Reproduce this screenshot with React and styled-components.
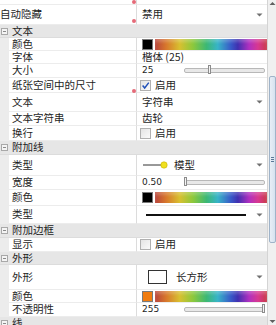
import React from "react";
import styled, { createGlobalStyle } from "styled-components";

const Global = createGlobalStyle`
  html, body {
    margin: 0;
    padding: 0;
    background: #ffffff;
  }
  body {
    font-family: "Noto Sans CJK SC", "Noto Sans", sans-serif;
    color: #1e1e1e;
  }
`;

const RAINBOW =
  "linear-gradient(to right, #b8443c 0%, #d8782c 10%, #d8c030 22%, #8cc83c 34%, #3cb874 46%, #38b4c8 56%, #3858c8 68%, #4030b0 74%, #b030c0 84%, #d83890 92%, #c83c48 100%)";

export default function App() {
  return (
    <>
      <Global />
      <Frame>
        <Grid>
          <Scrolled>
            <Row h={20}>
              <Label>线条</Label>
              <Value />
              <Dot top={15} />
            </Row>
            <Row h={20}>
              <Label>自动隐藏</Label>
              <Value>
                <ValueText>禁用</ValueText>
                <Arrow />
              </Value>
              <Dot top={14} />
            </Row>

            <Group h={13} title="文本" />
            <Row h={13}>
              <Label indent>颜色</Label>
              <Value>
                <ColorCell swatch="#000000" />
              </Value>
            </Row>
            <Row h={13}>
              <Label indent>字体</Label>
              <Value>
                <ValueText>楷体 (25)</ValueText>
              </Value>
            </Row>
            <Row h={14}>
              <Label indent>大小</Label>
              <Value>
                <Slider text="25" pos={32} />
              </Value>
            </Row>
            <Row h={15}>
              <Label indent>纸张空间中的尺寸</Label>
              <Value>
                <CheckCell checked />
              </Value>
              <Dot top={11} />
            </Row>
            <Row h={19}>
              <Label indent>文本</Label>
              <Value>
                <ValueText>字符串</ValueText>
                <Arrow />
              </Value>
            </Row>
            <Row h={14}>
              <Label indent>文本字符串</Label>
              <Value>
                <ValueText>齿轮</ValueText>
              </Value>
            </Row>
            <Row h={15}>
              <Label indent>换行</Label>
              <Value>
                <CheckCell />
              </Value>
            </Row>

            <Group h={14} title="附加线" />
            <Row h={21}>
              <Label indent>类型</Label>
              <Value>
                <LineMarker>
                  <svg width="26" height="8" viewBox="0 0 26 8">
                    <line x1="0" y1="4" x2="19" y2="4" stroke="#333" strokeWidth="1" />
                    <circle cx="21" cy="4" r="3.2" fill="#f0e020" stroke="#c8b400" strokeWidth="0.6" />
                  </svg>
                </LineMarker>
                <ValueText>模型</ValueText>
                <Arrow />
              </Value>
            </Row>
            <Row h={14}>
              <Label indent>宽度</Label>
              <Value>
                <Slider text="0.50" pos={1} />
              </Value>
            </Row>
            <Row h={16}>
              <Label indent>颜色</Label>
              <Value>
                <ColorCell swatch="#000000" />
              </Value>
            </Row>
            <Row h={18}>
              <Label indent>类型</Label>
              <Value>
                <LineSample />
                <Arrow />
              </Value>
            </Row>

            <Group h={14} title="附加边框" />
            <Row h={14}>
              <Label indent>显示</Label>
              <Value>
                <CheckCell />
              </Value>
            </Row>

            <Group h={13} title="外形" />
            <Row h={25}>
              <Label indent>外形</Label>
              <Value>
                <ShapeBox />
                <ValueText>长方形</ValueText>
                <Arrow />
              </Value>
            </Row>
            <Row h={13}>
              <Label indent>颜色</Label>
              <Value>
                <ColorCell swatch="#f07c10" />
              </Value>
            </Row>
            <Row h={14}>
              <Label indent>不透明性</Label>
              <Value>
                <Slider text="255" pos={100} />
              </Value>
            </Row>
            <Group h={14} title="线" />
          </Scrolled>
        </Grid>
        <ScrollBar>
          <ScrollButton>
            <svg width="7" height="5" viewBox="0 0 7 5">
              <path d="M0.5 4 L3.5 1 L6.5 4 Z" fill="#606060" />
            </svg>
          </ScrollButton>
          <Track>
            <Thumb>
              <Grip />
              <Grip />
              <Grip />
            </Thumb>
          </Track>
          <ScrollButton>
            <svg width="7" height="5" viewBox="0 0 7 5">
              <path d="M0.5 1 L3.5 4 L6.5 1 Z" fill="#606060" />
            </svg>
          </ScrollButton>
        </ScrollBar>
      </Frame>
    </>
  );
}

function Group({ h, title }) {
  return (
    <GroupRow h={h}>
      <ToggleSlot>
        <Toggle />
      </ToggleSlot>
      <GroupTitle>{title}</GroupTitle>
    </GroupRow>
  );
}

function Arrow() {
  return (
    <ArrowBox>
      <svg width="7" height="4" viewBox="0 0 7 4">
        <path d="M0.5 0.5 L6.5 0.5 L3.5 3.5 Z" fill="#707070" />
      </svg>
    </ArrowBox>
  );
}

function ColorCell({ swatch }) {
  return (
    <>
      <Swatch color={swatch} />
      <Spectrum />
    </>
  );
}

function CheckCell({ checked }) {
  return (
    <>
      <Box>
        {checked && (
          <svg width="11" height="11" viewBox="0 0 11 11">
            <path d="M2 5.5 L4.5 8.5 L9.5 2" fill="none" stroke="#2050b8" strokeWidth="1.8" />
          </svg>
        )}
      </Box>
      <ValueText>启用</ValueText>
    </>
  );
}

function Slider({ text, pos }) {
  return (
    <>
      <Number>{text}</Number>
      <Rail>
        <Knob style={{ left: `${pos}%` }} />
      </Rail>
    </>
  );
}

const Frame = styled.div`
  width: 276px;
  height: 325px;
  display: flex;
  overflow: hidden;
  background: #ffffff;
`;

const Grid = styled.div`
  width: 268px;
  height: 325px;
  overflow: hidden;
  border-right: 1px solid #d4d4d4;
  box-sizing: border-box;
`;

const Scrolled = styled.div`
  display: flex;
  flex-direction: column;
  margin-top: -15px;
`;

const Row = styled.div`
  position: relative;
  display: flex;
  height: ${(p) => p.h}px;
  flex-shrink: 0;
`;

const Label = styled.div`
  width: 137px;
  flex-shrink: 0;
  box-sizing: border-box;
  display: flex;
  align-items: center;
  padding-left: ${(p) => (p.indent ? "12px" : "0")};
  font-size: 10.5px;
  line-height: 1;
  white-space: nowrap;
  border-right: 1px solid #dcdcdc;
  border-bottom: 1px solid #ececec;
  background: ${(p) =>
    p.indent
      ? "linear-gradient(to right, #ececec 0, #ececec 9px, #ffffff 9px)"
      : "#ffffff"};
`;

const Value = styled.div`
  flex: 1;
  min-width: 0;
  display: flex;
  align-items: center;
  padding-left: 5px;
  box-sizing: border-box;
  border-bottom: 1px solid #ececec;
`;

const ValueText = styled.span`
  font-size: 10.5px;
  line-height: 1;
  white-space: nowrap;
`;

const Dot = styled.span`
  position: absolute;
  left: 132px;
  top: ${(p) => p.top}px;
  width: 4px;
  height: 4px;
  border-radius: 50%;
  background: #e05060;
  opacity: 0.85;
`;

const GroupRow = styled.div`
  display: flex;
  align-items: center;
  height: ${(p) => p.h}px;
  flex-shrink: 0;
  background: #e6e6e6;
  border-bottom: 1px solid #dcdcdc;
  box-sizing: border-box;
`;

const ToggleSlot = styled.span`
  width: 12px;
  display: flex;
  align-items: center;
  padding-left: 1px;
  box-sizing: border-box;
`;

const Toggle = styled.span`
  position: relative;
  width: 7px;
  height: 7px;
  border: 1px solid #a8a8a8;
  box-sizing: border-box;
  background: #f4f4f4;

  &::after {
    content: "";
    position: absolute;
    left: 1px;
    right: 1px;
    top: 2px;
    height: 1px;
    background: #8a8a8a;
  }
`;

const GroupTitle = styled.span`
  font-size: 10.5px;
  line-height: 1;
`;

const ArrowBox = styled.span`
  margin-left: auto;
  width: 16px;
  display: flex;
  justify-content: center;
  align-items: center;
`;

const Swatch = styled.span`
  width: 11px;
  height: 11px;
  flex-shrink: 0;
  background: ${(p) => p.color};
  border: 1px solid #7a7a7a;
  box-sizing: border-box;
`;

const Spectrum = styled.span`
  flex: 1;
  height: 11px;
  margin-left: 2px;
  background: ${RAINBOW};
  box-shadow: inset 0 3px 3px rgba(255, 255, 255, 0.2);
`;

const Box = styled.span`
  width: 11px;
  height: 11px;
  flex-shrink: 0;
  margin-left: -2px;
  margin-right: 4px;
  border: 1px solid #b0b0b0;
  background: linear-gradient(135deg, #e4e4e4, #fafafa);
  box-sizing: border-box;
  display: flex;
  align-items: center;
  justify-content: center;
  overflow: visible;
`;

const Number = styled.span`
  width: 42px;
  font-family: "DejaVu Sans", sans-serif;
  font-size: 9px;
  line-height: 1;
`;

const Rail = styled.span`
  position: relative;
  width: 79px;
  height: 3px;
  border: 1px solid #b8b8b8;
  border-radius: 2px;
  background: #e8e8e8;
`;

const Knob = styled.span`
  position: absolute;
  top: -4px;
  width: 3px;
  height: 9px;
  margin-left: -2px;
  background: #f4f4f4;
  border: 1px solid #8c8c8c;
  box-sizing: border-box;
`;

const LineMarker = styled.span`
  display: flex;
  align-items: center;
  margin-right: 5px;
  margin-left: 1px;
`;

const LineSample = styled.span`
  width: 100px;
  height: 2px;
  margin-left: 4px;
  background: #111111;
`;

const ShapeBox = styled.span`
  width: 19px;
  height: 14px;
  margin-left: 6px;
  margin-right: 9px;
  border: 1px solid #333333;
  box-sizing: border-box;
  background: #ffffff;
`;

const ScrollBar = styled.div`
  width: 8px;
  height: 325px;
  display: flex;
  flex-direction: column;
  background: #f0f0f0;
`;

const ScrollButton = styled.div`
  height: 7px;
  display: flex;
  align-items: center;
  justify-content: center;
  overflow: hidden;
`;

const Track = styled.div`
  flex: 1;
  position: relative;
  display: flex;
  flex-direction: column;
  padding-top: 69px;
`;

const Thumb = styled.div`
  height: 167px;
  margin: 0 0 0 1px;
  background: linear-gradient(to right, #e8eef6, #d6e2ef);
  border: 1px solid #9fb3c8;
  border-radius: 2px;
  box-sizing: border-box;
  display: flex;
  flex-direction: column;
  align-items: center;
  justify-content: center;
  gap: 1px;
`;

const Grip = styled.span`
  width: 3px;
  height: 1px;
  background: #5a7896;
`;
